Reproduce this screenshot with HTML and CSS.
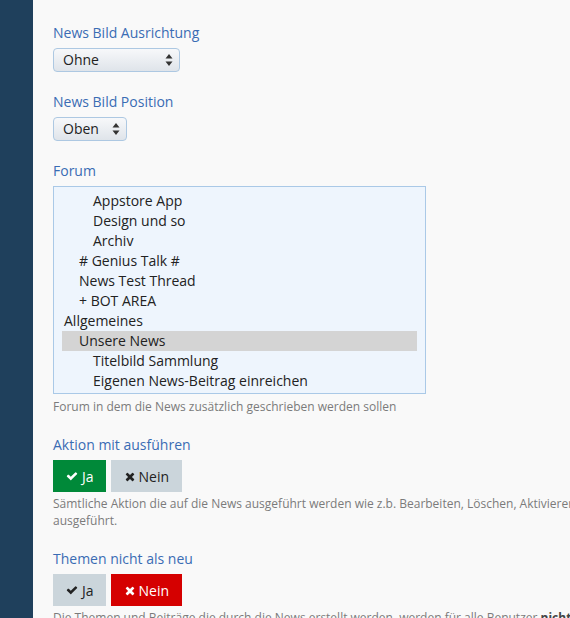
FILE: index.html
```html
<!DOCTYPE html>
<html lang="de">
<head>
<meta charset="utf-8">
<title>News Einstellungen</title>
<link rel="stylesheet" href="styles.css">
</head>
<body>
<div class="page">
  <aside class="sidebar"></aside>
  <main class="content">
    <div class="field">
      <label class="label">News Bild Ausrichtung</label>
      <div class="select select-wide"><span>Ohne</span>
        <svg class="arrows" viewBox="0 0 8 14" width="8" height="14"><path d="M4 1 L7.5 5.5 H0.5 Z M4 13 L7.5 8.5 H0.5 Z" fill="#333"/></svg>
      </div>
    </div>
    <div class="field">
      <label class="label">News Bild Position</label>
      <div class="select select-narrow"><span>Oben</span>
        <svg class="arrows" viewBox="0 0 8 14" width="8" height="14"><path d="M4 1 L7.5 5.5 H0.5 Z M4 13 L7.5 8.5 H0.5 Z" fill="#333"/></svg>
      </div>
    </div>
    <div class="field">
      <label class="label">Forum</label>
      <div class="listbox">
        <div class="opt lvl2">Appstore App</div>
        <div class="opt lvl2">Design und so</div>
        <div class="opt lvl2">Archiv</div>
        <div class="opt lvl1"># Genius Talk #</div>
        <div class="opt lvl1">News Test Thread</div>
        <div class="opt lvl1">+ BOT AREA</div>
        <div class="opt lvl0">Allgemeines</div>
        <div class="opt lvl1 selected">Unsere News</div>
        <div class="opt lvl2">Titelbild Sammlung</div>
        <div class="opt lvl2">Eigenen News-Beitrag einreichen</div>
      </div>
      <p class="help">Forum in dem die News zusätzlich geschrieben werden sollen</p>
    </div>
    <div class="field">
      <label class="label">Aktion mit ausführen</label>
      <div class="toggle">
        <button class="btn btn-ja btn-yes-on"><svg class="ico" viewBox="0 0 1792 1792" width="12" height="12"><path fill="currentColor" d="M1671 566q0 40-28 68l-724 724-136 136q-28 28-68 28t-68-28l-136-136-362-362q-28-28-28-68t28-68l136-136q28-28 68-28t68 28l294 295 656-657q28-28 68-28t68 28l136 136q28 28 28 68z"/></svg>Ja</button>
        <button class="btn btn-nein btn-off"><svg class="ico" viewBox="0 0 1408 1792" width="10" height="13"><path fill="currentColor" d="M1298 1322q0 40-28 68l-136 136q-28 28-68 28t-68-28l-294-294-294 294q-28 28-68 28t-68-28l-136-136q-28-28-28-68t28-68l294-294-294-294q-28-28-28-68t28-68l136-136q28-28 68-28t68 28l294 294 294-294q28-28 68-28t68 28l136 136q28 28 28 68t-28 68l-294 294 294 294q28 28 28 68z"/></svg>Nein</button>
      </div>
      <p class="help wide">Sämtliche Aktion die auf die News ausgeführt werden wie z.b. Bearbeiten, Löschen, Aktivieren und Deaktivieren, werden auch im Forum ausgeführt.</p>
    </div>
    <div class="field">
      <label class="label">Themen nicht als neu</label>
      <div class="toggle">
        <button class="btn btn-ja btn-off"><svg class="ico" viewBox="0 0 1792 1792" width="12" height="12"><path fill="currentColor" d="M1671 566q0 40-28 68l-724 724-136 136q-28 28-68 28t-68-28l-136-136-362-362q-28-28-28-68t28-68l136-136q28-28 68-28t68 28l294 295 656-657q28-28 68-28t68 28l136 136q28 28 28 68z"/></svg>Ja</button>
        <button class="btn btn-nein btn-no-on"><svg class="ico" viewBox="0 0 1408 1792" width="10" height="13"><path fill="currentColor" d="M1298 1322q0 40-28 68l-136 136q-28 28-68 28t-68-28l-294-294-294 294q-28 28-68 28t-68-28l-136-136q-28-28-28-68t28-68l294-294-294-294q-28-28-28-68t28-68l136-136q28-28 68-28t68 28l294 294 294-294q28-28 68-28t68 28l136 136q28 28 28 68t-28 68l-294 294 294 294q28 28 28 68z"/></svg>Nein</button>
      </div>
      <p class="help wide">Die Themen und Beiträge die durch die News erstellt werden, werden für alle Benutzer <b>nicht</b> als neu markiert.</p>
    </div>
  </main>
</div>
</body>
</html>
```
FILE: styles.css
```css
html, body {
  margin: 0;
  padding: 0;
  height: 100%;
  overflow: hidden;
  background: #f9f9f9;
  font-family: "Open Sans", "Noto Sans", sans-serif;
  color: #333;
}
.page {
  display: flex;
  min-height: 100%;
}
.sidebar {
  width: 33px;
  flex: 0 0 33px;
  background: #1f405c;
}
.content {
  padding: 23px 0 0 20px;
  flex: 0 0 800px;
}
.field {
  margin-bottom: 20px;
}
.label {
  display: block;
  font-size: 14px;
  line-height: 20px;
  color: #3a6cb4;
  margin-bottom: 5px;
}
.select {
  box-sizing: border-box;
  height: 24px;
  border: 1px solid #adc8e2;
  border-radius: 4px;
  background: linear-gradient(#f7f8fa, #dfe4ea);
  display: flex;
  align-items: center;
  justify-content: space-between;
  padding: 0 6px 2px 9px;
  font-size: 14px;
  color: #222;
}
.select-wide { width: 127px; }
.select-narrow { width: 74px; }
.arrows { display: block; margin-top: 2px; }
.listbox {
  box-sizing: border-box;
  width: 373px;
  height: 208px;
  border: 1px solid #aac9e7;
  background: #eef5fd;
  padding: 4px 8px 2px 8px;
}
.opt {
  font-size: 14px;
  line-height: 20px;
  height: 20px;
  color: #222;
  white-space: nowrap;
}
.lvl0 { padding-left: 2px; }
.lvl1 { padding-left: 17px; }
.lvl2 { padding-left: 31px; }
.selected { background: #d4d4d4; }
.help {
  margin: 0;
  padding-top: 4px;
  font-size: 12px;
  line-height: 17px;
  color: #7b7b7b;
}
.help.wide { width: 760px; padding-top: 3px; }
.help b { color: #444; }
.toggle {
  display: flex;
  gap: 5px;
}
.btn {
  border: 0;
  height: 32px;
  font-family: inherit;
  font-size: 14px;
  display: flex;
  align-items: center;
  gap: 4px;
  cursor: pointer;
}
.btn-ja { padding: 0 12px 0 13px; }
.btn-nein { padding: 0 13px 0 14px; }
.ico { display: block; }
.btn-yes-on { background: #008939; color: #fff; }
.btn-no-on { background: #d50000; color: #fff; }
.btn-off { background: #cbd5db; color: #222; }
```
